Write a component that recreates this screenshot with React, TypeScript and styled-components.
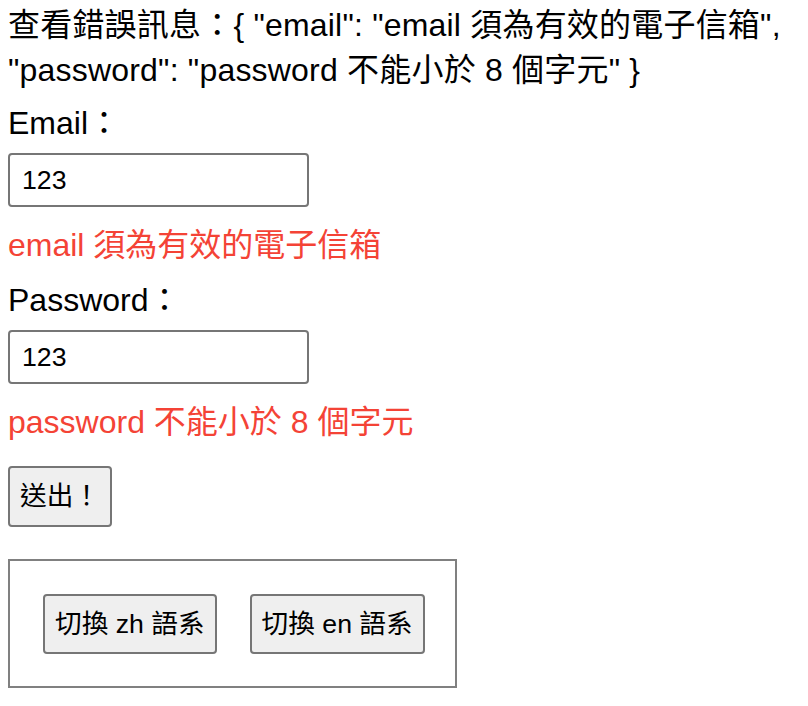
import React, { useState } from "react";
import styled, { createGlobalStyle } from "styled-components";

const GlobalStyle = createGlobalStyle`
  body {
    margin: 0;
    background: #ffffff;
    color: #000000;
    font-family: "Liberation Sans", "Noto Sans CJK TC", sans-serif;
    font-size: 32px;
  }
`;

const Page = styled.form`
  display: flex;
  flex-direction: column;
  align-items: flex-start;
  padding: 3px 8px 0;
`;

const ErrorSummary = styled.p`
  margin: 0;
  line-height: 45px;
  letter-spacing: 0.2px;
`;

const FieldLabel = styled.label<{ $gap: number }>`
  display: block;
  margin-top: ${({ $gap }) => $gap}px;
  line-height: 45px;
`;

const TextInput = styled.input`
  display: block;
  box-sizing: border-box;
  width: 301px;
  height: 54px;
  margin: 7px 0 0;
  padding: 0 12px;
  border: 2px solid #767676;
  border-radius: 4px;
  font-family: inherit;
  font-size: 26.67px;
  color: #000000;
  background: #ffffff;
  outline: none;
`;

const ErrorText = styled.div`
  margin-top: 16px;
  line-height: 45px;
  color: #f44336;
`;

const Button = styled.button<{ $height: number }>`
  box-sizing: border-box;
  height: ${({ $height }) => $height}px;
  padding: 0 10px;
  border: 2px solid #767676;
  border-radius: 4px;
  background: #efefef;
  color: #000000;
  font-family: inherit;
  font-size: 26.67px;
  line-height: 1;
  cursor: pointer;
`;

const SubmitButton = styled(Button)`
  margin-top: 21px;
`;

const LangBox = styled.div`
  display: flex;
  align-items: flex-start;
  gap: 33px;
  box-sizing: border-box;
  width: 449px;
  height: 129px;
  margin-top: 32px;
  padding: 33px 0 0 33px;
  border: 2px solid #808080;
`;

const messages = {
  zh: {
    email: "email 須為有效的電子信箱",
    password: "password 不能小於 8 個字元",
  },
  en: {
    email: "email must be a valid email",
    password: "password must be at least 8 characters",
  },
};

export default function App() {
  const [lang, setLang] = useState<"zh" | "en">("zh");
  const [email, setEmail] = useState("123");
  const [password, setPassword] = useState("123");
  const errors = messages[lang];
  const summary = `查看錯誤訊息：{ "email": "${errors.email}", "password": "${errors.password}" }`;

  return (
    <>
      <GlobalStyle />
      <Page onSubmit={(e) => e.preventDefault()}>
        <ErrorSummary>{summary}</ErrorSummary>

        <FieldLabel $gap={8} htmlFor="email">
          Email：
        </FieldLabel>
        <TextInput
          id="email"
          value={email}
          onChange={(e) => setEmail(e.target.value)}
        />
        <ErrorText>{errors.email}</ErrorText>

        <FieldLabel $gap={10} htmlFor="password">
          Password：
        </FieldLabel>
        <TextInput
          id="password"
          value={password}
          onChange={(e) => setPassword(e.target.value)}
        />
        <ErrorText>{errors.password}</ErrorText>

        <SubmitButton type="submit" $height={61}>
          送出！
        </SubmitButton>

        <LangBox>
          <Button type="button" $height={60} onClick={() => setLang("zh")}>
            切換 zh 語系
          </Button>
          <Button type="button" $height={60} onClick={() => setLang("en")}>
            切換 en 語系
          </Button>
        </LangBox>
      </Page>
    </>
  );
}
